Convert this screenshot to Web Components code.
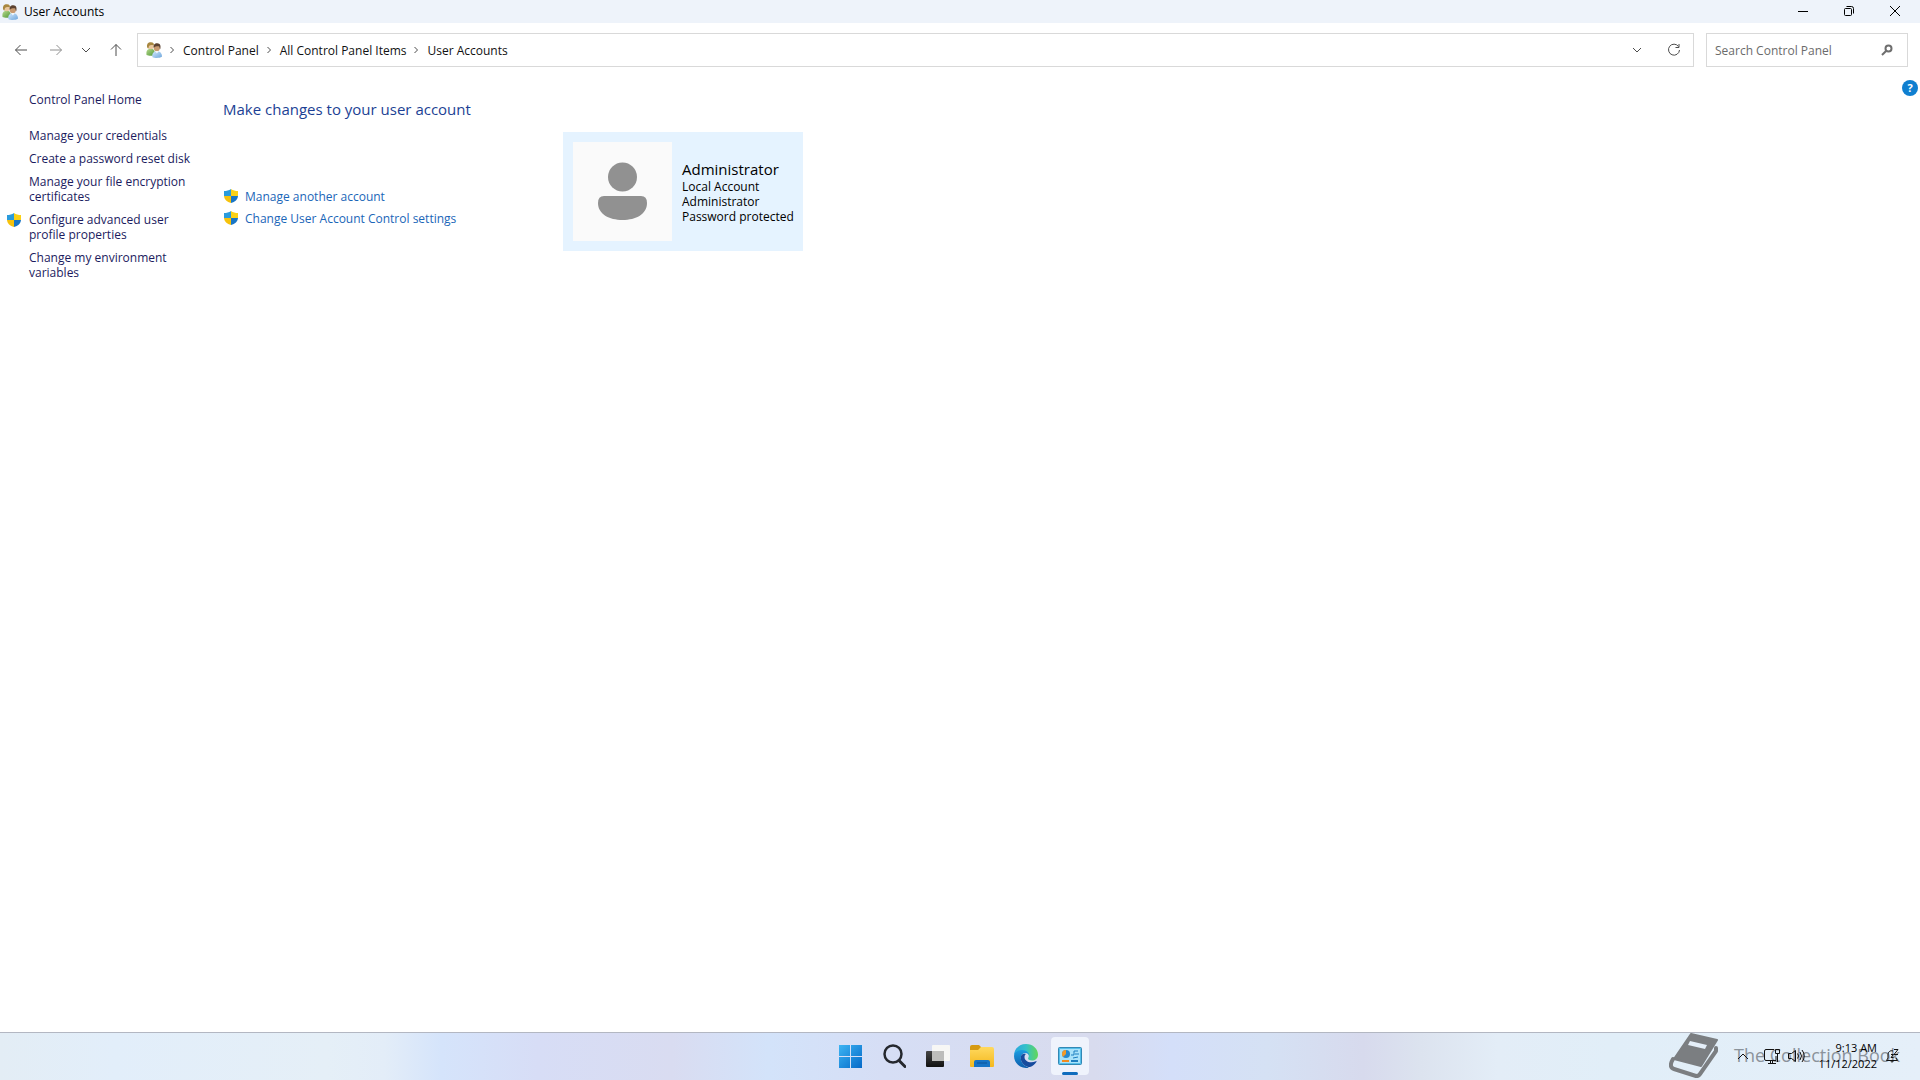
<!DOCTYPE html>
<html lang="en">
<head>
<meta charset="utf-8">
<title>User Accounts</title>
<style>
    html, body {
        height: 100%;
        margin: 0;
    }
    body {
        font-family: "Open Sans", "Noto Sans", sans-serif;
        font-size: 12px;
        line-height: 15px;
        color: #111;
        background: #fff;
    }
</style>
</head>
<body>
<win-desktop>
    <cp-window>
        <title-bar slot="title">User Accounts</title-bar>
        <nav-bar slot="nav"></nav-bar>
        <side-links slot="side"></side-links>
        <account-page>
            <account-card name="Administrator">
                <div>Local Account</div>
                <div>Administrator</div>
                <div>Password protected</div>
            </account-card>
        </account-page>
    </cp-window>
    <task-bar slot="taskbar"></task-bar>
</win-desktop>

<script>
const ICONS = {
    users: `<svg viewBox="0 0 16 16" width="16" height="16">
        <defs>
            <linearGradient id="g" x1="0" y1="0" x2="1" y2="1"><stop offset="0" stop-color="#b5d98c"/><stop offset="1" stop-color="#4f9636"/></linearGradient>
            <linearGradient id="b" x1="0" y1="0" x2="1" y2="1"><stop offset="0" stop-color="#d2e8fb"/><stop offset="1" stop-color="#6ea6dc"/></linearGradient>
        </defs>
        <path d="M0.5 13c-.5-3 .3-5.500 2.500-6h3.500c1.500.5 2.500 2 2.500 6-2 1-6.500 1-8.500 0z" fill="url(#g)"/>
        <circle cx="4.800" cy="4.200" r="3" fill="#e9c79d"/>
        <path d="M1.200 5.500C.3 2 2.200.1 5 .2c2.500.1 3.300 1.500 2.800 3C5.800 3.200 4.200 2.800 3.200 3.800c-.6.600-.3 1.700-1 3z" fill="#a8873f"/>
        <path d="M6.500 15.200c-.8-3 .5-5.300 2.700-5.800h3.500c2.200.5 3.500 2.800 3.200 5.300-2.200 1.500-7.200 1.500-9.400.5z" fill="url(#b)"/>
        <circle cx="10.800" cy="6.200" r="3" fill="#c89a70"/>
        <path d="M7.800 6C7 2.800 8.800 1.200 11.300 1.300c3 .1 3.800 2.700 2.900 5.900-.7-1-.8-2.300-1.300-3C11.500 4.200 9 3.900 7.800 6z" fill="#5c4230"/>
        <path d="M9.600 9.300l1.300 2.200 1.500-2.200z" fill="#fff"/>
    </svg>`,
    shield: `<svg viewBox="0 0 16 16" width="16" height="16">
        <path d="M8 1C6 2.600 3.500 3 1 3v5h7z" fill="#2a9bdc"/>
        <path d="M8 1c2 1.600 4.500 2 7 2v5H8z" fill="#fbd116"/>
        <path d="M1 8c.3 3.500 3 6 7 7V8z" fill="#f6c20c"/>
        <path d="M15 8c-.3 3.500-3 6-7 7V8z" fill="#1976c5"/>
    </svg>`,
    back: `<svg viewBox="0 0 16 16" width="16" height="16"><path d="M14 8H2.500M7.500 3l-5 5 5 5"/></svg>`,
    forward: `<svg viewBox="0 0 16 16" width="16" height="16"><path d="M2 8h11.500M8.500 3l5 5-5 5"/></svg>`,
    up: `<svg viewBox="0 0 16 16" width="16" height="16"><path d="M8 14V2.500M3 7.500l5-5 5 5"/></svg>`,
    down: `<svg viewBox="0 0 16 16" width="16" height="16"><path d="M4 6l4 4 4-4"/></svg>`,
    next: `<svg viewBox="0 0 8 8" width="8" height="8"><path d="M2.500 1l3 3-3 3"/></svg>`,
    refresh: `<svg viewBox="0 0 16 16" width="16" height="16"><path d="M12.500 4.500A5.500 5.500 0 1 0 13.500 8M13 2v3.500H9.500"/></svg>`,
    find: `<svg viewBox="0 0 12 12" width="12" height="12"><circle cx="7.500" cy="4.500" r="3"/><path d="M5.300 6.700L1 11"/></svg>`
};

function define(tag, css, html, init) {
    const template = document.createElement('template');
    template.innerHTML = `<style>${css}</style>${html}`;
    customElements.define(tag, class extends HTMLElement {
        constructor() {
            super();
            this.attachShadow({ mode: 'open' });
            this.shadowRoot.appendChild(template.content.cloneNode(true));
        }
        connectedCallback() {
            if (init) init(this, this.shadowRoot);
        }
    });
}

define('win-desktop', `
    :host { display: flex; flex-direction: column; min-height: 100vh; }
    .screen { flex: 1; display: flex; flex-direction: column; }
`, `<div class="screen"><slot></slot></div><slot name="taskbar"></slot>`);

define('cp-window', `
    :host { flex: 1; display: flex; flex-direction: column; background: #fff; }
    .body { flex: 1; display: grid; grid-template-columns: 199px 1fr; }
`, `
    <slot name="title"></slot>
    <slot name="nav"></slot>
    <div class="body">
        <slot name="side"></slot>
        <slot></slot>
    </div>
`);

define('title-bar', `
    :host { display: flex; align-items: center; height: 23px; padding: 0 2px; background: #eef3fa; color: #000; }
    .label { flex: 1; padding-left: 6px; }
    svg { display: block; }
    button {
        width: 46px; height: 21px; padding: 0; border: 0; background: none;
        display: grid; place-items: center; align-self: flex-start;
    }
    button svg { fill: none; stroke: #000; }
`, `
    ${ICONS.users}
    <span class="label"><slot></slot></span>
    <button aria-label="Minimize"><svg width="12" height="12"><path d="M1 6.500h10"/></svg></button>
    <button aria-label="Restore"><svg width="12" height="12"><rect x="1.500" y="3.500" width="7" height="7" rx="1"/><path d="M3.500 1.500h5a2 2 0 0 1 2 2v5"/></svg></button>
    <button aria-label="Close"><svg width="12" height="12"><path d="M1 1l10 10M11 1L1 11"/></svg></button>
`);

define('nav-bar', `
    :host { display: flex; align-items: center; gap: 12px; padding: 10px 12px 10px 13px; }
    svg { display: block; fill: none; stroke: #4c4c4c; }
    button { padding: 0; border: 0; background: none; }
    .arrows { display: flex; align-items: center; width: 112px; gap: 14px; }
    .arrows .forward { margin-left: 5px; }
    .arrows .forward svg { stroke: #8f8f8f; }
    .box {
        display: flex; align-items: center; box-sizing: border-box; height: 34px;
        border: 1px solid #d9d9d9; background: #fff;
    }
    .address { flex: 1; padding: 0 11px 0 8px; }
    nav { flex: 1; display: flex; align-items: center; }
    nav > svg:first-child { stroke: none; margin-right: 6px; }
    nav a { color: #111; text-decoration: none; margin: 0 6px 0 7px; }
    .address .tools { display: flex; gap: 21px; }
    .search { width: 202px; padding: 0 14px 0 8px; }
    .search input {
        flex: 1; min-width: 0; padding: 0; border: 0; outline: 0; background: none;
        font: inherit; color: #111;
    }
    .search input::placeholder { color: #6b6b6b; opacity: 1; }
    .search svg { stroke: #6e6e6e; stroke-width: 2; }
`, `
    <div class="arrows">
        <button aria-label="Back">${ICONS.back}</button>
        <button class="forward" aria-label="Forward" disabled>${ICONS.forward}</button>
        <button aria-label="Recent locations">${ICONS.down}</button>
        <button aria-label="Up">${ICONS.up}</button>
    </div>
    <div class="box address">
        <nav aria-label="Address">
            ${ICONS.users}
            ${ICONS.next}<a href="#">Control Panel</a>
            ${ICONS.next}<a href="#">All Control Panel Items</a>
            ${ICONS.next}<a href="#">User Accounts</a>
        </nav>
        <div class="tools">
            <button aria-label="Previous locations">${ICONS.down}</button>
            <button aria-label="Refresh">${ICONS.refresh}</button>
        </div>
    </div>
    <div class="box search">
        <input type="text" aria-label="Search Control Panel" placeholder="Search Control Panel">
        <button aria-label="Search">${ICONS.find}</button>
    </div>
`);

define('side-links', `
    :host { display: block; padding: 15px 6px 0 6px; }
    a { color: #1b1b5e; text-decoration: none; }
    .home { display: block; margin: 0 0 21px 23px; }
    ul { list-style: none; margin: 0; padding: 0; display: grid; gap: 8px; }
    li { display: grid; grid-template-columns: 16px 1fr; column-gap: 7px; }
    li a { grid-column: 2; }
    li svg { grid-column: 1; grid-row: 1; }
`, `
    <a class="home" href="#">Control Panel Home</a>
    <ul>
        <li><a href="#">Manage your credentials</a></li>
        <li><a href="#">Create a password reset disk</a></li>
        <li><a href="#">Manage your file encryption certificates</a></li>
        <li>${ICONS.shield}<a href="#">Configure advanced user profile properties</a></li>
        <li><a href="#">Change my environment variables</a></li>
    </ul>
`);

define('account-page', `
    :host { display: grid; grid-template-columns: 340px 1fr auto; align-items: start; padding: 3px 2px 0 24px; }
    h1 { margin: 18px 0 68px; font-size: 15px; line-height: 22px; font-weight: 400; color: #1c3f94; white-space: nowrap; }
    .tasks { display: grid; gap: 6px; }
    .tasks a { display: flex; align-items: center; gap: 6px; color: #1a66b8; text-decoration: none; }
    svg { display: block; }
    .card { padding-top: 52px; }
    .help {
        width: 16px; height: 16px; padding: 0; border: 0; border-radius: 50%;
        background: #0f7fd0; color: #fff; font: bold 11px/16px "Open Sans", sans-serif;
    }
`, `
    <div>
        <h1>Make changes to your user account</h1>
        <div class="tasks">
            <a href="#">${ICONS.shield}Manage another account</a>
            <a href="#">${ICONS.shield}Change User Account Control settings</a>
        </div>
    </div>
    <div class="card"><slot></slot></div>
    <button class="help" aria-label="Help">?</button>
`);

define('account-card', `
    :host {
        display: flex; align-items: center; gap: 10px; box-sizing: border-box;
        width: 240px; padding: 10px; background: #e5f3ff; color: #000;
    }
    .avatar { flex: none; display: block; background: #fafafa; }
    .name { font-size: 15px; line-height: 20px; }
    .info { white-space: nowrap; }
`, `
    <svg class="avatar" width="99" height="99" fill="#919191">
        <circle cx="49.500" cy="35" r="14.500"/>
        <path d="M31 54h37q6 0 6 7c0 11-11 17-24.500 17S25 72 25 61q0-7 6-7z"/>
    </svg>
    <div class="info">
        <div class="name"></div>
        <slot></slot>
    </div>
`, (el, root) => {
    root.querySelector('.name').textContent = el.getAttribute('name');
});

define('task-bar', `
    :host {
        position: relative; box-sizing: border-box; height: 48px; padding-bottom: 2px;
        display: grid; grid-template-columns: 1fr auto 1fr; align-items: center;
        border-top: 1px solid #b3b7c2;
        background: linear-gradient(90deg, #e3edf5 0%, #e2eefa 6%, #e5eff7 17%, #e3edf8 20%, #d5e4fb 23%, #d7ddf6 28%,
            #d9dcf1 35%, #d3e3fa 40%, #d6def5 46%, #d8dbee 57%, #d4dff9 61%, #d5e1f4 66%,
            #d7daed 71%, #dce3ef 74%, #e3edf7 78%, #e1eef8 84%, #e5eff9 100%);
    }
    svg { display: block; }
    .apps { grid-column: 2; display: flex; }
    .apps button {
        width: 38px; height: 38px; margin: 0 3px; padding: 0; border: 0; border-radius: 4px;
        background: none; display: grid; place-items: center; position: relative;
    }
    .apps .active { background: #eff3fc; }
    .apps .active::after {
        content: ""; position: absolute; left: 11px; bottom: 0;
        width: 16px; height: 3px; border-radius: 2px; background: #0f6cbd;
    }
    .tray { position: relative; justify-self: end; display: flex; align-items: center; padding-right: 20px; }
    .tray button { padding: 0; border: 0; background: none; font: inherit; color: #000; }
    .tray svg { fill: none; stroke: #111; }
    .quick { display: flex; gap: 8px; margin-left: 15px; }
    .tray .quick { margin-left: 15px; }
    .tray .clock { width: 72px; margin-right: 8px; font-size: 11px; line-height: 16px; text-align: right; }
    .brand {
        position: absolute; right: 20px; top: 0;
        display: flex; align-items: flex-start; gap: 14px;
        font-size: 18px; line-height: 44px; color: #8b939b; pointer-events: none;
    }
`, `
    <div class="brand">
        <svg width="51" height="47">
            <path d="M22 1L48 7 32 33 5 26z" fill="#7b7e81" stroke="#7b7e81" stroke-width="2" stroke-linejoin="round"/>
            <path d="M21 8l17 4-2 4-17-4z" fill="#e5eff9"/>
            <path d="M4 26c-3 5-3 9 1 10l22 7c2 0 3 0 4-2l16-23V15" fill="none" stroke="#7b7e81" stroke-width="4" stroke-linecap="round" stroke-linejoin="round"/>
        </svg>
        <span>The Collection Book</span>
    </div>
    <div class="apps">
        <button aria-label="Start">
            <svg width="24" height="24">
                <defs><linearGradient id="w" x1="0" y1="0" x2="24" y2="24" gradientUnits="userSpaceOnUse"><stop offset="0" stop-color="#3fb8f5"/><stop offset="1" stop-color="#0569c8"/></linearGradient></defs>
                <path d="M1 1h11v11H1zM13 1h11v11H13zM1 13h11v11H1zM13 13h11v11H13z" fill="url(#w)"/>
            </svg>
        </button>
        <button aria-label="Search">
            <svg width="24" height="24" fill="none" stroke="#25282e"><circle cx="11" cy="10" r="8.500" stroke-width="2.500"/><path d="M17 16.500l6 6" stroke-width="3" stroke-linecap="round"/></svg>
        </button>
        <button aria-label="Task view">
            <svg width="24" height="24">
                <defs><linearGradient id="t" x1="0" y1="0" x2="0" y2="1"><stop offset="0" stop-color="#454545"/><stop offset="1" stop-color="#111"/></linearGradient></defs>
                <rect x="6" y="1" width="18" height="16" rx="1" fill="#f7f7f5"/>
                <rect y="7" width="18" height="16" rx="1" fill="url(#t)"/>
                <path d="M6 7h12v10H6z" fill="#bdbdbb"/>
            </svg>
        </button>
        <button aria-label="File Explorer">
            <svg width="24" height="24">
                <defs><linearGradient id="f" x1="0" y1="0" x2="0" y2="1"><stop offset="0" stop-color="#ffd95e"/><stop offset="1" stop-color="#f4b81e"/></linearGradient></defs>
                <path d="M0 3q0-2 2-2h7l3 3v6H0z" fill="#d69a12"/>
                <path d="M0 6h8l3-3h11q2 0 2 2v17q0 1-1 1H1q-1 0-1-1z" fill="url(#f)"/>
                <path d="M4 23v-5q0-2 2-2h12q2 0 2 2v5z" fill="#1673c6"/>
                <path d="M7 19h10" stroke="#0d5599" stroke-width="1"/>
            </svg>
        </button>
        <button aria-label="Microsoft Edge">
            <svg width="24" height="24" viewBox="0 0 24 24">
                <defs>
                    <linearGradient id="e1" x1="0" y1="0" x2="1" y2="0"><stop offset="0" stop-color="#2aa5e0"/><stop offset=".5" stop-color="#34c1c9"/><stop offset="1" stop-color="#62d757"/></linearGradient>
                    <linearGradient id="e2" x1="0" y1="0" x2="0" y2="1"><stop offset="0" stop-color="#1b9de2"/><stop offset="1" stop-color="#0d5cab"/></linearGradient>
                </defs>
                <path d="M0 11C.5 4.500 5.500 0 12 0c7 0 12 5 12 10.500 0 4-3 6-6 6-3.500 0-4.500-1.500-3.700-2.700C16 11 13 7.500 9 7.500 5 7.500 1.500 9 0 11z" fill="url(#e1)"/>
                <path d="M0 12c0-3.500 4-6 8-6 4.500 0 7.500 3 7.300 6-.3-1.800-2-3-4-3-3 0-4.800 2.500-4.500 5.500.4 4.500 4 8 8.200 9-1 .4-2 .5-3 .5C5.500 24 0 18.500 0 12z" fill="url(#e2)"/>
                <path d="M8 10.500c-1.500 1.500-1.700 4-.7 6.500 1.300 3.500 5 6.300 8.700 6 2.700-1 5-2.700 6.500-5.300.2-.5-.2-.7-.6-.5-5.500 2.500-11.400.3-11.400-4.200 0-1.200.5-2.300 1.500-3-1.600-.5-3-.2-4 .5z" fill="#164b9d"/>
            </svg>
        </button>
        <button class="active" aria-label="Control Panel">
            <svg width="24" height="20">
                <rect x=".5" y="1.500" width="23" height="17" rx="1" fill="#55bfea" stroke="#3288b5"/>
                <rect x="2" y="3" width="20" height="14" fill="#a9e2fa"/>
                <circle cx="8" cy="8" r="4" fill="#2689d0"/>
                <path d="M8 8V4a4 4 0 0 0-4 4 4 4 0 0 0 1 3z" fill="#f29a29"/>
                <path d="M13 9h3V5h4M17 8h4M15 12l5-1" fill="none" stroke="#1d7ec0"/>
                <path d="M4 15h7" stroke="#f08c20" stroke-width="2"/><path d="M13 15h7" stroke="#1d7ec0" stroke-width="2"/>
            </svg>
        </button>
    </div>
    <div class="tray">
        <button aria-label="Show hidden icons"><svg width="12" height="16"><path d="M1 11l5-5 5 5"/></svg></button>
        <button class="quick" aria-label="Network and volume">
            <svg width="16" height="16"><path d="M10 1.500H2q-1.500 0-1.500 1.500v8q0 1.500 1.500 1.500h10V8M4 15.500h8M6.500 13v2M8.500 13v2M11.500 1.500h4v4h-4zM13.500 6v8"/></svg>
            <svg width="17" height="16"><path d="M.5 5.500h3l4-3v11l-4-3h-3zM9.500 5.500q2 2.500 0 5M12 4q3 4 0 8M14 2q4.500 6 0 12"/></svg>
        </button>
        <button class="clock" aria-label="Date and time"><div>9:13 AM</div><div>11/12/2022</div></button>
        <button aria-label="Notifications">
            <svg width="15" height="16"><path d="M8 3C5 2 3 4 3 7v3l-1.500 2.500h11L11 10M5.500 13q1.500 2.500 3 0M9 1.500h4l-4 5h4M6 6.500h2.500l-2.500 3h2.500"/></svg>
        </button>
    </div>
`);
</script>
</body>
</html>
